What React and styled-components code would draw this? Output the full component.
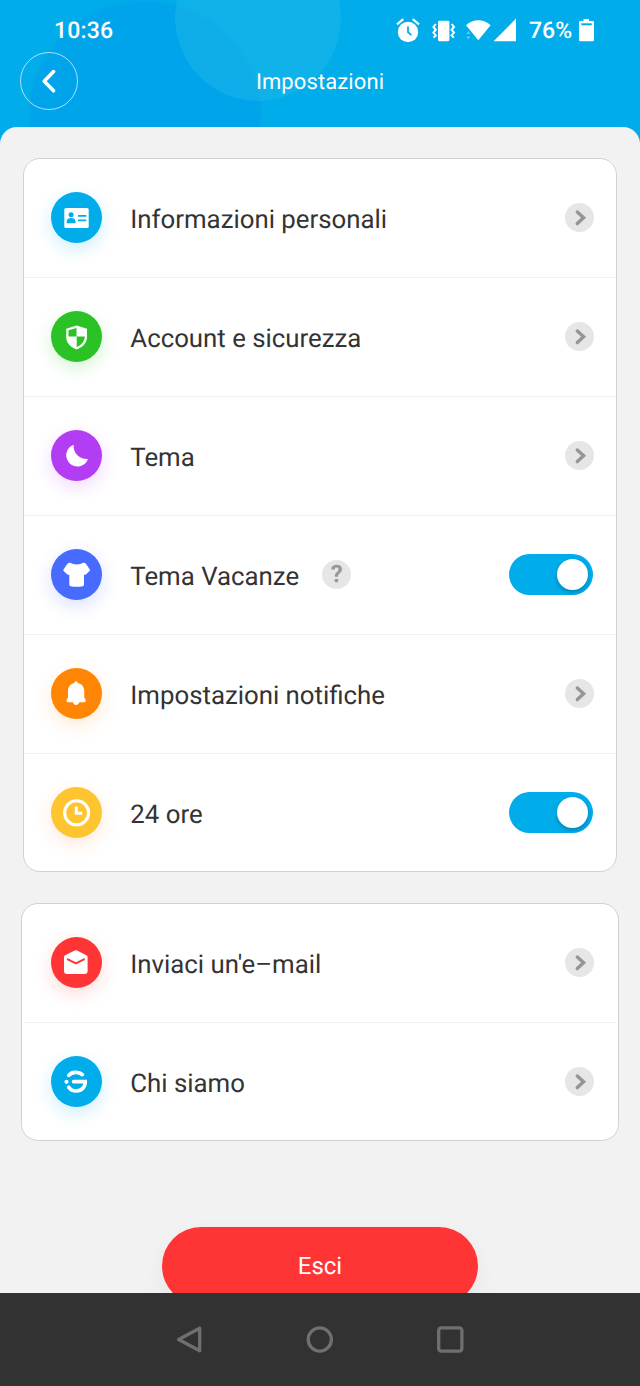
import React, { useState } from 'react'
import styled, { createGlobalStyle } from 'styled-components'

const GlobalStyle = createGlobalStyle`
  body {
    margin: 0;
    background: #f2f2f2;
    font-family: Roboto, "Liberation Sans", sans-serif;
    text-rendering: geometricPrecision;
  }
  * {
    box-sizing: border-box;
  }
  svg {
    display: block;
    flex: none;
  }
`

const Screen = styled.div`
  display: flex;
  flex-direction: column;
  width: 640px;
  height: 1386px;
  overflow: hidden;
  background:
    radial-gradient(circle 83px at 258px 18px, rgba(36, 188, 232, 0.4) 82.5px, transparent 83px),
    radial-gradient(circle 118px at 145px 117px, #00a4ea 114px, transparent 118px),
    #00acea;
`

const StatusBar = styled.div`
  display: flex;
  align-items: center;
  height: 52px;
  padding: 8px 45px 0 54px;
  color: #fff;
  font-size: 23px;
  font-weight: 500;
`

const Time = styled.span`
  flex: 1;
  letter-spacing: 0.2px;
`

const StatusIcons = styled.div`
  display: flex;
  align-items: center;
`

const Percent = styled.span`
  width: 50px;
  padding-left: 12px;
  white-space: nowrap;
`

const TitleBar = styled.div`
  display: grid;
  grid-template-columns: 58px 1fr 58px;
  align-items: center;
  height: 75px;
  padding: 0 20px 17px;
`

const BackButton = styled.button`
  display: flex;
  align-items: center;
  justify-content: center;
  width: 58px;
  height: 58px;
  padding: 0;
  border: 1px solid rgba(255, 255, 255, 0.65);
  border-radius: 50%;
  background: transparent;
`

const Title = styled.h1`
  margin: 0;
  padding-top: 4px;
  color: #fff;
  font-size: 22px;
  font-weight: 400;
  line-height: 26px;
  text-align: center;
  letter-spacing: 0.1px;
`

const Sheet = styled.main`
  display: flex;
  flex: 1;
  flex-direction: column;
  align-items: center;
  min-height: 0;
  padding-top: 31px;
  overflow: hidden;
  border-radius: 17px 17px 0 0;
  background: #f2f2f2;
`

const Card = styled.section`
  flex: none;
  width: ${p => (p.$wide ? 598 : 594)}px;
  margin-bottom: 31px;
  padding: 0 ${p => (p.$wide ? 2 : 0)}px;
  border: 1px solid #d2d2d2;
  border-radius: 17px;
  background: #fff;
`

const Row = styled.div`
  display: flex;
  align-items: center;
  height: 119px;
  padding: 0 22px 1px 26.5px;
  border-bottom: 1px solid #f0f0f0;

  &:last-child {
    height: 117px;
    padding-bottom: 0;
    border-bottom: 0;
  }
`

const Badge = styled.div`
  flex: none;
  width: 51px;
  height: 51px;
  margin-right: 28.8px;
  border-radius: 50%;
  background: ${p => p.$color};
  box-shadow: 0 6px 18px ${p => p.$glow};
`

const Label = styled.span`
  padding-top: 4px;
  color: #333;
  font-size: 25.8px;
  line-height: 32px;
  white-space: nowrap;
`

const Round = styled.span`
  display: flex;
  flex: none;
  align-items: center;
  justify-content: center;
  width: 29px;
  height: 29px;
  border-radius: 50%;
  background: #e6e6e6;
`

const Help = styled(Round)`
  margin: 0 0 1px 23px;
  color: #979797;
  font-size: 24px;
  font-weight: 700;
  line-height: 29px;
`

const Spacer = styled.span`
  flex: 1;
`

const Track = styled.button`
  display: flex;
  flex: none;
  align-items: center;
  justify-content: ${p => (p.$on ? 'flex-end' : 'flex-start')};
  width: 84px;
  height: 41px;
  margin-right: 1.5px;
  padding: 0 5px;
  border: 0;
  border-radius: 21px;
  background: ${p => (p.$on ? '#00acea' : '#d0d0d0')};
`

const Knob = styled.span`
  width: 31px;
  height: 31px;
  border-radius: 50%;
  background: #fff;
  box-shadow: 0 2px 4px rgba(0, 0, 0, 0.25);
`

const LogoutButton = styled.button`
  flex: none;
  width: 316px;
  height: 78px;
  margin-top: 54.5px;
  padding: 0;
  border: 0;
  border-radius: 39px;
  background: #ff3535;
  box-shadow: 0 8px 24px rgba(0, 0, 0, 0.05);
  color: #fff;
  font-family: inherit;
  font-size: 24px;
  text-rendering: inherit;
`

const NavBar = styled.nav`
  display: flex;
  flex: none;
  align-items: center;
  justify-content: center;
  gap: 103px;
  height: 93px;
  background: #323232;
`

const NavIcon = ({ children }) => (
  <svg width="28" height="28" viewBox="0 0 28 28" fill="none" stroke="#6f6f6f" strokeWidth="3.3" strokeLinejoin="round">
    {children}
  </svg>
)

const icons = {
  card: (
    <>
      <rect x="13.3" y="16" width="24.4" height="20" rx="1.6" fill="#fff" />
      <circle cx="20.1" cy="22.8" r="2.5" fill="#00acea" />
      <path d="M15.7 31.3V29.4C15.7 27 18 25.9 20.1 25.9S24.5 27 24.5 29.4V31.3Z" fill="#00acea" />
      <path d="M27 23.9H35.3M27 28.4H35.3" stroke="#00acea" strokeWidth="1.9" />
    </>
  ),
  shield: (
    <>
      <path d="M25.6 14.6L36 17.7V26C36 32 31.4 36.4 25.6 38.4C19.8 36.4 15.2 32 15.2 26V17.7Z" fill="#fff" />
      <path d="M25.5 17L17.5 19.3V25.6H25.5ZM25.7 25.6H33.7C33.7 30.8 30.2 34.2 25.7 36Z" fill="#2bc225" />
    </>
  ),
  moon: <path d="M22.7 14.7A11.2 11.2 0 1 0 37 29A12.9 12.9 0 0 1 22.7 14.7Z" fill="#fff" />,
  shirt: (
    <path
      d="M19.3 13.8C23 16 28.4 16 32.1 13.8C33.5 13.6 34.5 14.2 35.3 15.2L38.8 20.4C39.3 21.3 38.6 22 37.8 22.8L35.2 25.3C34.5 26 33.3 25.9 33 25.8V35.6C33 36.5 32.6 37 31.8 37.2C28 38 23.4 38 19.6 37.2C18.7 37 18.3 36.5 18.3 35.6V25.8C18 25.9 16.8 26 16.1 25.3L13.4 22.8C12.6 22 12 21.3 12.5 20.4L16.1 15.2C16.9 14.2 17.9 13.6 19.3 13.8Z"
      fill="#fff"
    />
  ),
  bell: (
    <path
      d="M25.1 13.2C26.1 13.2 26.6 13.9 26.7 15C31 15.8 33.2 19 33.2 23V29.5C33.3 30.3 34.8 31 34.8 32.6C34.8 33.7 34.3 34.2 33.4 34.2H28.1C27.9 36 26.8 37 25.1 37S22.3 36 22.1 34.2H16.8C15.9 34.2 15.4 33.7 15.4 32.6C15.4 31 16.9 30.3 17 29.5V23C17 19 19.2 15.8 23.5 15C23.6 13.9 24.1 13.2 25.1 13.2Z"
      fill="#fff"
    />
  ),
  clock: (
    <g fill="none" stroke="#fff" strokeWidth="3.1">
      <circle cx="25.6" cy="25.8" r="12" />
      <path d="M25.3 19.4V26.3H31.2" />
    </g>
  ),
  mail: (
    <>
      <path d="M23.8 13.5Q24.9 12.8 26 13.5L35.4 18.2Q36.6 18.9 36.6 20.2V34Q36.6 37 33.6 37H16Q13 37 13 34V20.2Q13 18.9 14.2 18.2Z" fill="#fff" />
      <path d="M16.8 22.3L24.9 26.3L33 22.3" fill="none" stroke="#ff3535" strokeWidth="2" strokeLinecap="round" />
    </>
  ),
  logo: (
    <g fill="none" stroke="#fff" strokeWidth="3.7" strokeLinecap="round">
      <path d="M17.7 19.4C20.6 15.6 27.8 15.2 31.4 18.6" />
      <path d="M22.6 25.6H34.2C34.4 30.9 30.6 34.9 25.4 34.9C22 34.9 19.2 33.5 17.7 31.2" />
      <circle cx="15.5" cy="25.8" r="2.1" fill="#fff" stroke="none" />
    </g>
  ),
}

const accountItems = [
  { icon: 'card', label: 'Informazioni personali', color: '#00acea', glow: 'rgba(0, 172, 234, 0.2)' },
  { icon: 'shield', label: 'Account e sicurezza', color: '#2bc225', glow: 'rgba(43, 194, 37, 0.2)' },
  { icon: 'moon', label: 'Tema', color: '#b23df2', glow: 'rgba(178, 61, 242, 0.2)' },
  { icon: 'shirt', label: 'Tema Vacanze', color: '#476aff', glow: 'rgba(71, 106, 255, 0.2)', help: true, toggle: true },
  { icon: 'bell', label: 'Impostazioni notifiche', color: '#ff8604', glow: 'rgba(255, 134, 4, 0.18)' },
  { icon: 'clock', label: '24 ore', color: '#ffc530', glow: 'rgba(255, 140, 60, 0.2)', toggle: true },
]

const infoItems = [
  { icon: 'mail', label: "Inviaci un'e–mail", color: '#ff3535', glow: 'rgba(255, 53, 53, 0.18)' },
  { icon: 'logo', label: 'Chi siamo', color: '#00acea', glow: 'rgba(0, 172, 234, 0.2)' },
]

const Toggle = () => {
  const [on, setOn] = useState(true)

  return (
    <Track $on={on} role="switch" aria-checked={on} onClick={() => setOn(!on)}>
      <Knob />
    </Track>
  )
}

const SettingRow = (props) => {
  const { icon, label, color, glow, help, toggle } = props

  return (
    <Row>
      <Badge $color={color} $glow={glow}>
        <svg width="51" height="51" viewBox="0 0 51 51">{icons[icon]}</svg>
      </Badge>
      <Label>{label}</Label>
      {help ? <Help>?</Help> : null}
      <Spacer />
      {toggle ? <Toggle /> : (
        <Round>
          <svg width="29" height="29" viewBox="0 0 29 29" fill="none" stroke="#959595" strokeWidth="3.4" strokeLinecap="round">
            <path d="M12.3 9L18.6 14.7L12.3 20.6" />
          </svg>
        </Round>
      )}
    </Row>
  )
}

const StatusGlyphs = () => (
  <svg width="122" height="26" viewBox="0 0 122 26" fill="#fff">
    {/* alarm */}
    <circle cx="13" cy="15" r="10.2" />
    <path d="M2 7.3L8.3 2.2M24 7.3L17.7 2.2" stroke="#fff" strokeWidth="2.2" />
    <path d="M13 9.6V15.2L16.4 18.2" fill="none" stroke="#00acea" strokeWidth="1.8" />
    {/* vibration */}
    <rect x="43" y="3.8" width="11.4" height="20.4" rx="1.4" />
    <path d="M40.8 7L38.4 10L40.8 12.8L38.4 15.6L40.8 18.4L38.6 20.6M56.6 7L59 10L56.6 12.8L59 15.6L56.6 18.4L58.8 20.6" fill="none" stroke="#fff" strokeWidth="2" />
    {/* wifi */}
    <path d="M71 8.2C78 1.5 88.6 1.5 95.6 8.2L83.3 23.3Z" />
    <path d="M71.2 17L73.4 14L75.6 17ZM71.2 19.4L73.4 22.4L75.6 19.4Z" opacity="0.35" />
    {/* signal */}
    <path d="M98.6 24.2L121 1.6V24.2Z" />
  </svg>
)

const App = () => (
  <>
    <GlobalStyle />
    <Screen>
      <StatusBar>
        <Time>10:36</Time>
        <StatusIcons>
          <StatusGlyphs />
          <Percent>76%</Percent>
          <svg width="28" height="24" viewBox="0 0 28 24" fill="#fff">
            <path d="M16.5 1H22V3H25.6Q27 3 27 4.4V21.9Q27 23.3 25.6 23.3H13.4Q12 23.3 12 21.9V4.4Q12 3 13.4 3H16.5Z" />
            <path d="M14.3 6.3H24.7" stroke="#00acea" strokeWidth="2" />
          </svg>
        </StatusIcons>
      </StatusBar>
      <TitleBar>
        <BackButton aria-label="Indietro">
          <svg width="28" height="28" viewBox="0 0 28 28" fill="none" stroke="#fff" strokeWidth="3.6" strokeLinecap="round" strokeLinejoin="round">
            <path d="M18.6 4.6L9.2 14.2L18.6 23.8" />
          </svg>
        </BackButton>
        <Title>Impostazioni</Title>
      </TitleBar>
      <Sheet>
        <Card>
          {accountItems.map(item => <SettingRow key={item.icon} {...item} />)}
        </Card>
        <Card $wide>
          {infoItems.map(item => <SettingRow key={item.icon} {...item} />)}
        </Card>
        <LogoutButton>Esci</LogoutButton>
      </Sheet>
      <NavBar>
        <NavIcon><path d="M24.7 2.2V24.8L3.6 13.5Z" /></NavIcon>
        <NavIcon><circle cx="13.8" cy="13.5" r="11.6" /></NavIcon>
        <NavIcon><rect x="1.7" y="1.9" width="23.2" height="23.2" rx="2.6" /></NavIcon>
      </NavBar>
    </Screen>
  </>
)

export default App
